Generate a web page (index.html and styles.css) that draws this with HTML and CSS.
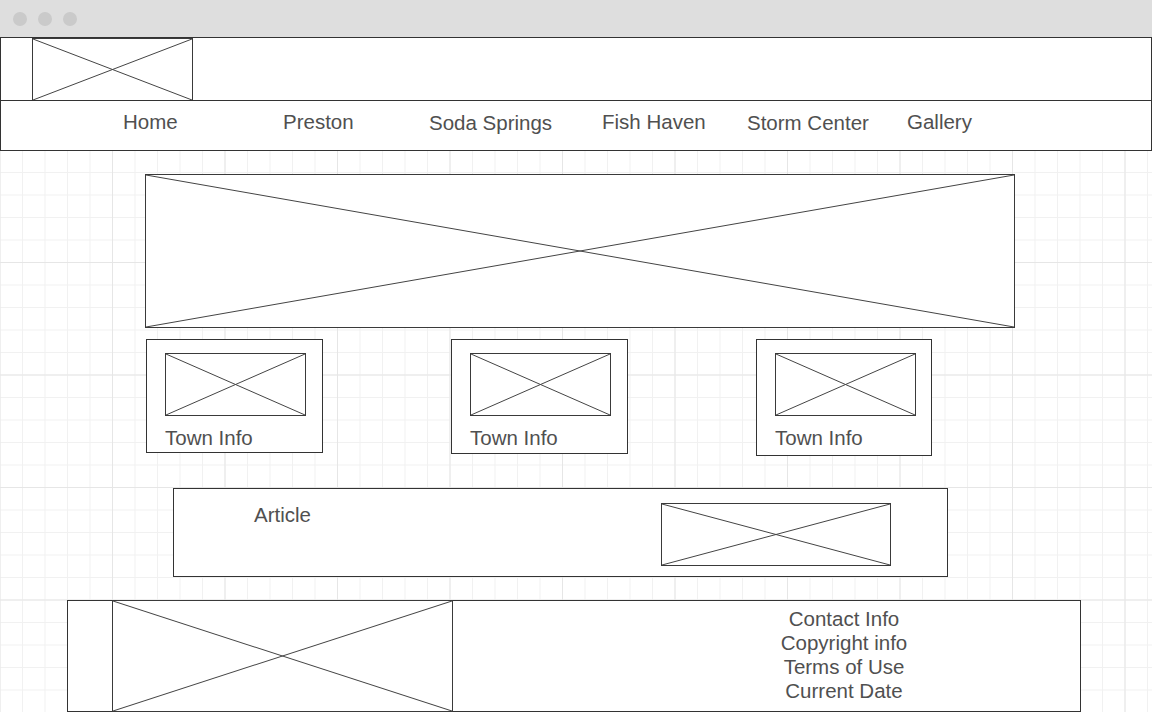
FILE: index.html
```html
<!DOCTYPE html>
<html lang="en">
<head>
<meta charset="utf-8">
<title>Wireframe</title>
<link rel="stylesheet" href="styles.css">
</head>
<body>
<div class="titlebar">
  <span class="dot"></span><span class="dot"></span><span class="dot"></span>
</div>
<div class="page">
  <header class="site-header">
    <div class="brand-row">
      <svg class="ph logo" viewBox="0 0 100 100" preserveAspectRatio="none"><line x1="0" y1="0" x2="100" y2="100"/><line x1="100" y1="0" x2="0" y2="100"/></svg>
    </div>
    <nav class="nav">
      <a class="nav-link">Home</a>
      <a class="nav-link">Preston</a>
      <a class="nav-link nav-link--low">Soda Springs</a>
      <a class="nav-link">Fish Haven</a>
      <a class="nav-link nav-link--low">Storm Center</a>
      <a class="nav-link">Gallery</a>
    </nav>
  </header>

  <main class="content">
    <svg class="ph hero" viewBox="0 0 100 100" preserveAspectRatio="none"><line x1="0" y1="0" x2="100" y2="100"/><line x1="100" y1="0" x2="0" y2="100"/></svg>

    <section class="towns">
      <div class="card card--a">
        <svg class="ph card-img" viewBox="0 0 100 100" preserveAspectRatio="none"><line x1="0" y1="0" x2="100" y2="100"/><line x1="100" y1="0" x2="0" y2="100"/></svg>
        <p class="card-label">Town Info</p>
      </div>
      <div class="card card--b">
        <svg class="ph card-img" viewBox="0 0 100 100" preserveAspectRatio="none"><line x1="0" y1="0" x2="100" y2="100"/><line x1="100" y1="0" x2="0" y2="100"/></svg>
        <p class="card-label">Town Info</p>
      </div>
      <div class="card card--c">
        <svg class="ph card-img" viewBox="0 0 100 100" preserveAspectRatio="none"><line x1="0" y1="0" x2="100" y2="100"/><line x1="100" y1="0" x2="0" y2="100"/></svg>
        <p class="card-label">Town Info</p>
      </div>
    </section>

    <article class="article">
      <p class="article-title">Article</p>
      <svg class="ph article-img" viewBox="0 0 100 100" preserveAspectRatio="none"><line x1="0" y1="0" x2="100" y2="100"/><line x1="100" y1="0" x2="0" y2="100"/></svg>
    </article>

    <footer class="footer">
      <svg class="ph footer-img" viewBox="0 0 100 100" preserveAspectRatio="none"><line x1="0" y1="0" x2="100" y2="100"/><line x1="100" y1="0" x2="0" y2="100"/></svg>
      <div class="footer-text">
        <p>Contact Info</p>
        <p>Copyright info</p>
        <p>Terms of Use</p>
        <p>Current Date</p>
      </div>
    </footer>
  </main>
</div>
</body>
</html>
```

FILE: styles.css
```css
* { box-sizing: border-box; }

html, body {
  margin: 0;
  padding: 0;
  background: #ffffff;
  font-family: "Liberation Sans", Arial, sans-serif;
  color: #505050;
}

.titlebar {
  height: 37px;
  background: #dedede;
  display: flex;
  align-items: center;
  gap: 11px;
  padding-left: 13px;
  padding-top: 1px;
}

.dot {
  width: 14px;
  height: 14px;
  border-radius: 50%;
  background: #cacaca;
}

.page {
  height: 675px;
  overflow: hidden;
  background-color: #ffffff;
  background-image:
    linear-gradient(to right, #e6e6e6 1px, transparent 1px),
    linear-gradient(to bottom, #e6e6e6 1px, transparent 1px),
    linear-gradient(to right, #f1f1f1 1px, transparent 1px),
    linear-gradient(to bottom, #f1f1f1 1px, transparent 1px);
  background-size: 112.5px 112.5px, 112.5px 112.5px, 22.5px 22.5px, 22.5px 22.5px;
  background-position: -0.5px 0, -0.5px 0, -0.5px 0, -0.5px 0;
}

/* placeholder boxes with an X */
.ph {
  display: block;
  background: #ffffff;
  border: 1px solid #3a3a3a;
}
.ph line {
  stroke: #444444;
  stroke-width: 1;
  vector-effect: non-scaling-stroke;
}

/* header */
.site-header {
  width: 1152px;
  background: #ffffff;
  border: 1px solid #333333;
}

.brand-row {
  height: 63px;
  border-bottom: 1px solid #333333;
}

.logo {
  margin-left: 31px;
  width: 161px;
  height: 62px;
  border-bottom: none;
}

.nav {
  height: 49px;
  display: grid;
  grid-template-columns: 160px 146px 173px 145px 160px auto;
  padding-left: 122px;
  padding-top: 9px;
}

.nav-link {
  font-size: 20.5px;
  line-height: 23px;
  color: #505050;
  text-decoration: none;
  white-space: nowrap;
}

.nav-link--low {
  padding-top: 1px;
}

/* main content */
.content {
  display: block;
}

.hero {
  margin: 23px 0 0 145px;
  width: 870px;
  height: 154px;
}

.towns {
  display: flex;
  align-items: flex-start;
  gap: 128px;
  margin-top: 11px;
  padding-left: 146px;
}

.card {
  width: 177px;
  background: #ffffff;
  border: 1px solid #333333;
  padding: 13px 0 3px 18px;
}
.card--b { padding-bottom: 4px; }
.card--c { width: 176px; padding-bottom: 6px; }

.card-img {
  width: 141px;
  height: 63px;
}

.card-label {
  margin: 10px 0 0 0;
  font-size: 20.5px;
  line-height: 23px;
}

.article {
  display: flex;
  align-items: flex-start;
  margin: 32px 0 0 173px;
  width: 775px;
  height: 89px;
  background: #ffffff;
  border: 1px solid #333333;
  padding: 14px 56px 0 80px;
}

.article-title {
  margin: 0;
  font-size: 20.5px;
  line-height: 23px;
}

.article-img {
  margin-left: auto;
  width: 230px;
  height: 63px;
}

.footer {
  display: flex;
  align-items: flex-start;
  margin: 23px 0 0 67px;
  width: 1014px;
  height: 112px;
  background: #ffffff;
  border: 1px solid #333333;
}

.footer-img {
  margin: -1px 0 -1px 44px;
  width: 341px;
  height: 112px;
  flex-shrink: 0;
}

.footer-text {
  margin-left: 291px;
  width: 200px;
  padding-top: 6px;
  text-align: center;
}

.footer-text p {
  margin: 0;
  font-size: 20.5px;
  line-height: 24px;
  white-space: nowrap;
}
```
